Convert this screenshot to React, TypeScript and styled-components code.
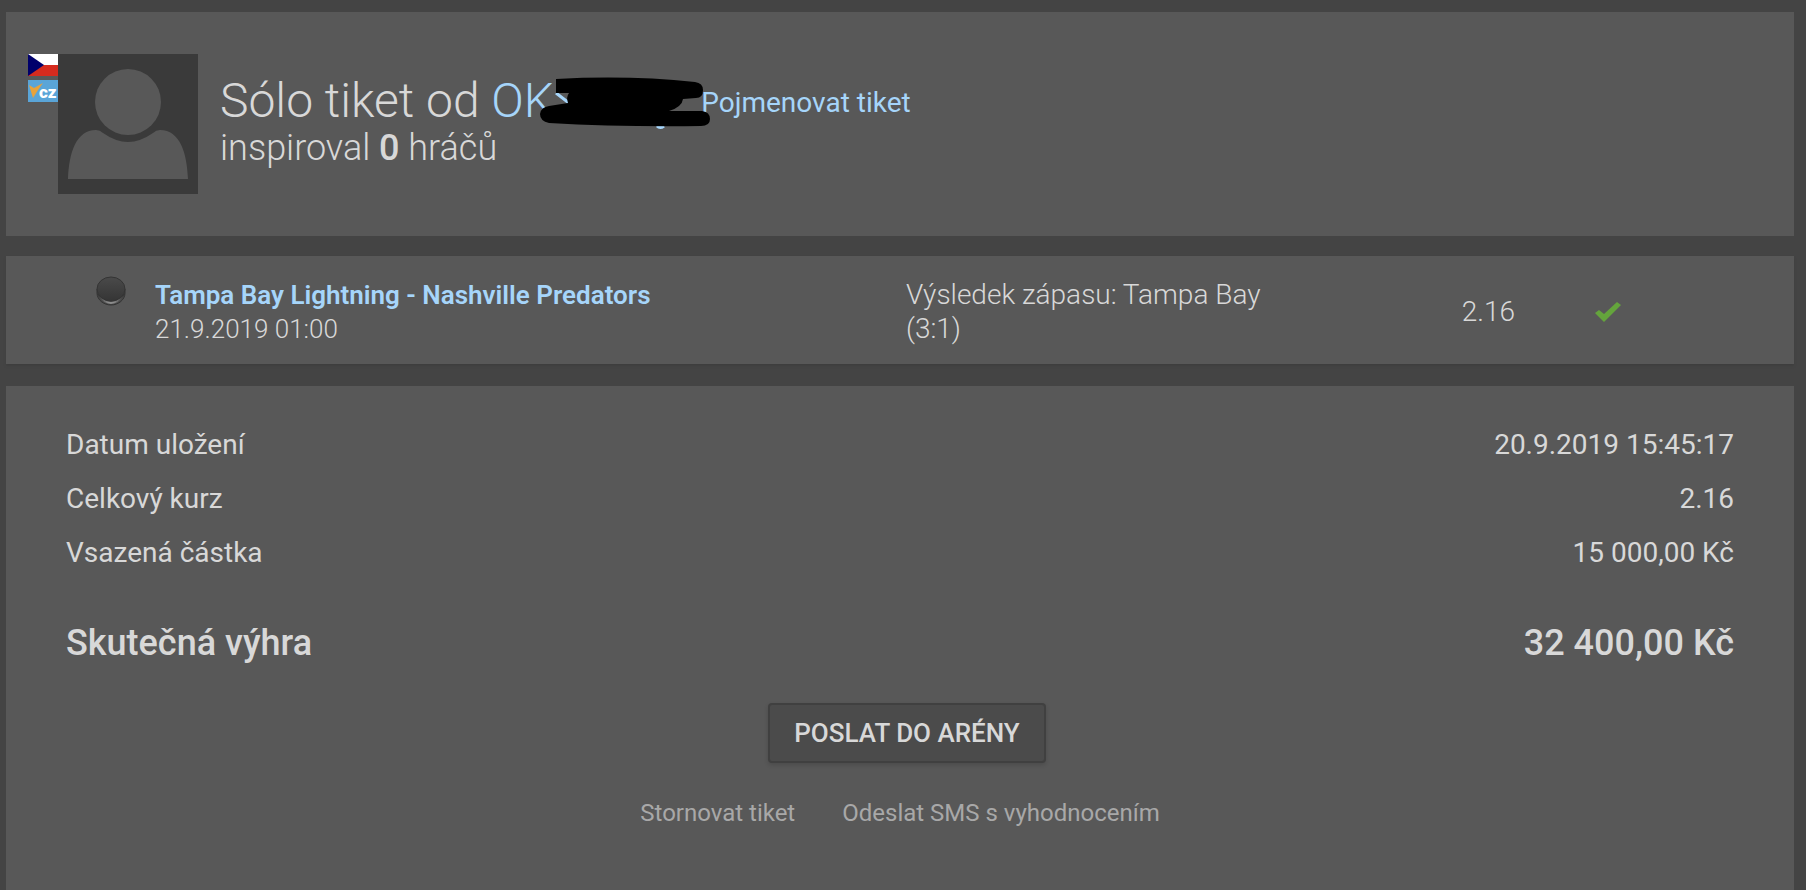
import React from 'react';
import styled, { createGlobalStyle, css } from 'styled-components';

const Global = createGlobalStyle`
  *, *::before, *::after { box-sizing: border-box; }
  body {
    margin: 0;
    background: #444;
    color: #d8d8d8;
    font-family: Roboto, "Liberation Sans", sans-serif;
  }
`;

const Page = styled.main`
  min-height: 100vh;
  padding: 12px 12px 0 6px;
  display: flex;
  flex-direction: column;
`;

const Panel = styled.section`
  background: #585858;
`;

const Header = styled(Panel)`
  display: flex;
  align-items: flex-start;
  padding: 42px 22px;
  margin-bottom: 20px;
`;

const Flags = styled.div`
  display: flex;
  flex-direction: column;
  gap: 4px;
  svg { display: block; }
`;

const Avatar = styled.svg`
  display: block;
  flex: none;
  width: 140px;
  height: 140px;
  background: #3a3a3a;
`;

const Heading = styled.div`
  padding: 18px 0 0 22px;
  font-weight: 300;
`;

const TitleRow = styled.div`
  display: flex;
  align-items: center;
`;

const Title = styled.h1`
  margin: 0;
  font-size: 48px;
  font-weight: 300;
  line-height: 58px;
  white-space: nowrap;
`;

const link = css`
  color: #a6d5fa;
  text-decoration: none;
`;

const UserLink = styled.a`
  ${link}
  position: relative;
  display: inline-block;
  width: 210px;
`;

const Scribble = styled.svg`
  position: absolute;
  left: 48px;
  top: 3px;
`;

const RenameLink = styled.a`
  ${link}
  padding-top: 4px;
  font-size: 28px;
  line-height: 34px;
  font-weight: 400;
  white-space: nowrap;
`;

const Subtitle = styled.p`
  margin: 0;
  font-size: 36px;
  line-height: 36px;
  b { font-weight: 500; }
`;

const BetTable = styled.table`
  width: 100%;
  table-layout: fixed;
  border-collapse: collapse;
  margin-bottom: 22px;
  background: #585858;
  box-shadow: 0 2px 2px #3f3f3f;
  font-size: 28px;
  font-weight: 300;
  line-height: 34px;
`;

const Cell = styled.td<{ $w?: string }>`
  width: ${(p) => p.$w ?? 'auto'};
  padding: 22px 0 18px;
  text-align: left;
  vertical-align: middle;
  svg { display: block; }
`;

const SportCell = styled(Cell)`
  padding: 20px 0 0 90px;
  vertical-align: top;
`;

const OddsCell = styled(Cell)`
  padding-right: 79px;
  text-align: right;
`;

const MatchLink = styled.a`
  ${link}
  display: block;
  font-size: 26px;
  font-weight: 600;
`;

const Kickoff = styled.time`
  display: block;
  font-size: 26px;
`;

const Pick = styled.div`
  max-width: 400px;
`;

const Summary = styled(Panel)`
  flex: 1;
  padding: 32px 60px;
`;

const Totals = styled.dl`
  margin: 0 0 33px;
`;

const Line = styled.div<{ $total?: boolean }>`
  display: flex;
  justify-content: space-between;
  font-size: ${(p) => (p.$total ? 36 : 28)}px;
  font-weight: ${(p) => (p.$total ? 500 : 400)};
  line-height: 54px;
  margin-top: ${(p) => (p.$total ? 36 : 0)}px;
  dd { margin: 0; }
`;

const Actions = styled.div`
  display: flex;
  justify-content: center;
  padding-left: 14px;
`;

const SendButton = styled.button`
  height: 60px;
  padding: 0 24px;
  border: 2px solid #404040;
  border-radius: 4px;
  background: #4b4b4b;
  box-shadow: 0 2px 4px rgba(0, 0, 0, 0.15);
  color: #d8d8d8;
  font: 500 26px Roboto, "Liberation Sans", sans-serif;
  text-transform: uppercase;
`;

const MinorActions = styled.nav`
  display: flex;
  justify-content: center;
  gap: 47px;
  margin-top: 32px;
  a {
    color: #a8a8a8;
    font-size: 24px;
    line-height: 36px;
    text-decoration: none;
  }
`;

const FlagCz = () => (
  <svg width="30" height="22" viewBox="0 0 30 22" aria-label="Česko">
    <rect width="30" height="11" fill="#fff" />
    <rect y="11" width="30" height="11" fill="#d52b1e" />
    <path d="M0 0 16 11 0 22Z" fill="#00006b" />
  </svg>
);

const BadgeCz = () => (
  <svg width="30" height="22" viewBox="0 0 30 22" aria-label="cz">
    <rect width="30" height="22" fill="#5aa5d8" />
    <path d="M1 5 6 8 15 3 10 10 5 18Z" fill="#e8a33c" />
    <text x="11" y="18" fontSize="17" fontWeight="900" fill="#fff" fontFamily="Roboto, sans-serif">cz</text>
  </svg>
);

const Person = () => (
  <Avatar viewBox="0 0 140 140" aria-label="Avatar">
    <circle cx="70" cy="48" r="33" fill="#585858" />
    <path
      d="M10 125C11 99 18 76 38 76Q42 76 45 79Q58 88 70 88Q82 88 95 79Q98 76 102 76C122 76 129 99 130 125Z"
      fill="#585858"
    />
  </Avatar>
);

const Puck = () => (
  <svg width="30" height="30" viewBox="0 0 30 30" aria-label="Hokej">
    <defs>
      <linearGradient id="puck" x1="0" y1="0" x2="0" y2="1">
        <stop offset="0" stopColor="#4a4a4a" />
        <stop offset="1" stopColor="#353535" />
      </linearGradient>
      <linearGradient id="rim" x1="0" y1="0" x2="1" y2="0">
        <stop offset="0" stopColor="#333" />
        <stop offset="0.4" stopColor="#8c8c8c" />
        <stop offset="0.6" stopColor="#8c8c8c" />
        <stop offset="1" stopColor="#333" />
      </linearGradient>
    </defs>
    <path d="M1 13V17C1 24 8 29 15 29S29 24 29 17V13Z" fill="#484848" stroke="#333" />
    <path d="M2 18Q8 27 15 27T28 18" fill="none" stroke="url(#rim)" strokeWidth="2" />
    <ellipse cx="15" cy="13" rx="14" ry="12" fill="url(#puck)" stroke="#343434" />
  </svg>
);

const Check = () => (
  <svg width="28" height="24" viewBox="0 0 28 24" aria-label="Vyhráno">
    <path d="M1 13 5 10 10 14 23 2 27 5 10 22Z" fill="#64a43c" />
  </svg>
);

const totals = [
  ['Datum uložení', '20.9.2019 15:45:17'],
  ['Celkový kurz', '2.16'],
  ['Vsazená částka', '15 000,00 Kč'],
];

export default function App() {
  return (
    <>
      <Global />
      <Page>
        <Header as="header">
          <Flags>
            <FlagCz />
            <BadgeCz />
          </Flags>
          <Person />
          <Heading>
            <TitleRow>
              <Title>
                Sólo tiket od{' '}
                <UserLink href="#user">
                  OK
                  <Scribble width="174" height="56" viewBox="0 0 174 56" aria-hidden="true">
                    <path d="M17 18 30 28M118 51Q121 54 125 51" fill="none" stroke="#a6d5fa" strokeWidth="3" />
                    <path
                      d="M17 4Q90 0 156 7Q164 8 164 15Q164 23 157 23L144 24Q143 32 130 36L163 36Q171 37 171 44Q171 51 162 51Q80 52 10 48Q1 46 1 39Q2 32 10 31L29 28Q27 22 30 18L17 18Z"
                      fill="#000"
                    />
                  </Scribble>
                </UserLink>
              </Title>
              <RenameLink href="#rename">Pojmenovat tiket</RenameLink>
            </TitleRow>
            <Subtitle>
              inspiroval <b>0</b> hráčů
            </Subtitle>
          </Heading>
        </Header>

        <BetTable>
          <tbody>
            <tr>
              <SportCell $w="149px">
                <Puck />
              </SportCell>
              <Cell $w="42%">
                <MatchLink href="#match">Tampa Bay Lightning - Nashville Predators</MatchLink>
                <Kickoff>21.9.2019 01:00</Kickoff>
              </Cell>
              <Cell>
                <Pick>Výsledek zápasu: Tampa Bay (3:1)</Pick>
              </Cell>
              <OddsCell $w="12%">2.16</OddsCell>
              <Cell $w="200px">
                <Check />
              </Cell>
            </tr>
          </tbody>
        </BetTable>

        <Summary>
          <Totals>
            {totals.map(([name, value]) => (
              <Line key={name}>
                <dt>{name}</dt>
                <dd>{value}</dd>
              </Line>
            ))}
            <Line $total>
              <dt>Skutečná výhra</dt>
              <dd>32 400,00 Kč</dd>
            </Line>
          </Totals>
          <Actions>
            <SendButton type="button">Poslat do arény</SendButton>
          </Actions>
          <MinorActions>
            <a href="#cancel">Stornovat tiket</a>
            <a href="#sms">Odeslat SMS s vyhodnocením</a>
          </MinorActions>
        </Summary>
      </Page>
    </>
  );
}
